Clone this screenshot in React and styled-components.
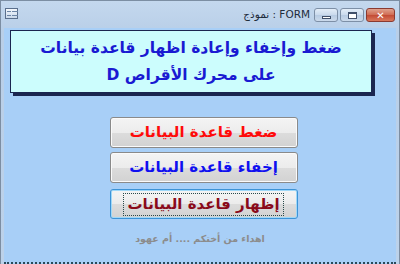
import React from "react";
import styled, { createGlobalStyle } from "styled-components";

const GlobalStyle = createGlobalStyle`
  html, body {
    margin: 0;
    padding: 0;
    overflow: hidden;
    background: #ffffff;
  }
`;

const Window = styled.div`
  width: 400px;
  height: 264px;
  box-sizing: border-box;
  border: 1px solid #7c8ea3;
  border-bottom: none;
  background: linear-gradient(#c4d8ee, #b9cfe8 30px, #bcd2ea);
  display: flex;
  flex-direction: column;
  font-family: "DejaVu Sans", sans-serif;
`;

const TitleBar = styled.div`
  height: 26px;
  flex: none;
  display: flex;
  align-items: flex-start;
  padding: 0 4px 0 4px;
  box-sizing: border-box;
`;

const AppIcon = styled.div`
  margin-top: 7px;
  border: 1px solid #5a6f8c;
  background: linear-gradient(#f4f8fc, #c9d8ea);
  display: grid;
  grid-template-columns: 4px 6px;
  gap: 1px;
  padding: 1px;
  box-sizing: border-box;
  width: 13px;
  height: 11px;
  span {
    background: #6d86a6;
    height: 1px;
    margin-top: 1px;
  }
`;

const Caption = styled.div`
  margin-left: auto;
  margin-right: 2px;
  margin-top: 7px;
  font-family: "DejaVu Sans", sans-serif;
  font-size: 10.5px;
  color: #1e2c3c;
  white-space: nowrap;
`;

const CapButton = styled.div`
  margin-top: 7px;
  width: ${(p) => p.$w}px;
  height: 14px;
  margin-left: 2px;
  box-sizing: border-box;
  border: 1px solid ${(p) => (p.$close ? "#8a3a30" : "#7d8fa6")};
  border-radius: 3px;
  background: ${(p) =>
    p.$close
      ? "linear-gradient(#e0a28e, #cf6a52 50%, #c24a34 51%, #d9785c)"
      : "linear-gradient(#e3edf8, #c9d9ec 50%, #b7cbe3 51%, #cbdaeb)"};
  display: flex;
  align-items: center;
  justify-content: center;
  color: #fff;
  font-size: 10px;
  font-weight: bold;
  font-family: "DejaVu Sans", sans-serif;
`;

const MinGlyph = styled.div`
  width: 9px;
  height: 3px;
  margin-top: 5px;
  background: #fff;
  border: 1px solid #40506a;
  box-sizing: border-box;
`;

const MaxGlyph = styled.div`
  width: 9px;
  height: 7px;
  background: #fff;
  border: 1px solid #40506a;
  box-sizing: border-box;
  border-top-width: 2px;
`;

const Content = styled.div`
  flex: 1;
  margin: 1px 3px 0 3px;
  background: #a8cff7;
  border-bottom: 2px dotted #2a4a5a;
  display: flex;
  flex-direction: column;
  align-items: flex-start;
`;

const HeaderBox = styled.div`
  margin: 2px 0 0 6px;
  width: 362px;
  height: 63px;
  box-sizing: border-box;
  border: 1px solid #1b2650;
  box-shadow: 3px 3px 0 #1b2650;
  background: #ccfdfd;
  direction: rtl;
  display: flex;
  flex-direction: column;
  align-items: center;
  justify-content: center;
  color: #1a1ad2;
  font-weight: bold;
  font-size: 15.5px;
  line-height: 27px;
`;

const Buttons = styled.div`
  align-self: stretch;
  display: flex;
  flex-direction: column;
  align-items: center;
  gap: 4px;
  margin-top: 24px;
  padding-left: 7px;
`;

const FormButton = styled.div`
  width: 188px;
  height: ${(p) => (p.$focus ? 30 : 31)}px;
  margin-top: ${(p) => (p.$focus ? 2 : 0)}px;
  box-sizing: border-box;
  border: 1px solid ${(p) => (p.$focus ? "#3d93d6" : "#8a8a8a")};
  border-radius: 3px;
  background: linear-gradient(#f4f4f4, #ececec 50%, #dcdcdc 51%, #d2d2d2);
  box-shadow: ${(p) => (p.$focus ? "inset 0 0 0 1px #9fd8f8" : "inset 0 0 0 1px #fafafa")};
  display: flex;
  align-items: center;
  justify-content: center;
  padding: 3px;
`;

const ButtonLabel = styled.div`
  direction: rtl;
  color: ${(p) => p.$color};
  font-weight: bold;
  font-size: 15px;
  line-height: 20px;
  padding: 0 3px 1px;
  border: 1px dotted ${(p) => (p.$focus ? "#2a4a4a" : "transparent")};
`;

const Footer = styled.div`
  align-self: stretch;
  text-align: center;
  direction: rtl;
  margin-top: 14px;
  color: #8c8c8c;
  font-weight: bold;
  font-size: 9.5px;
`;

export default function App() {
  return (
    <>
      <GlobalStyle />
      <Window>
        <TitleBar>
          <AppIcon>
            <span />
            <span />
            <span />
            <span />
          </AppIcon>
          <Caption>نموذج : FORM</Caption>
          <CapButton $w={24}>
            <MinGlyph />
          </CapButton>
          <CapButton $w={24}>
            <MaxGlyph />
          </CapButton>
          <CapButton $w={29} $close>
            ✕
          </CapButton>
        </TitleBar>
        <Content>
          <HeaderBox>
            <div>ضغط وإخفاء وإعادة اظهار قاعدة بيانات</div>
            <div>على محرك الأقراص D</div>
          </HeaderBox>
          <Buttons>
            <FormButton>
              <ButtonLabel $color="#ff0a0a">ضغط قاعدة البيانات</ButtonLabel>
            </FormButton>
            <FormButton>
              <ButtonLabel $color="#1010f0">إخفاء قاعدة البيانات</ButtonLabel>
            </FormButton>
            <FormButton $focus>
              <ButtonLabel $color="#8a0a1a" $focus>
                إظهار قاعدة البيانات
              </ButtonLabel>
            </FormButton>
          </Buttons>
          <Footer>اهداء من أختكم .... أم عهود</Footer>
        </Content>
      </Window>
    </>
  );
}
